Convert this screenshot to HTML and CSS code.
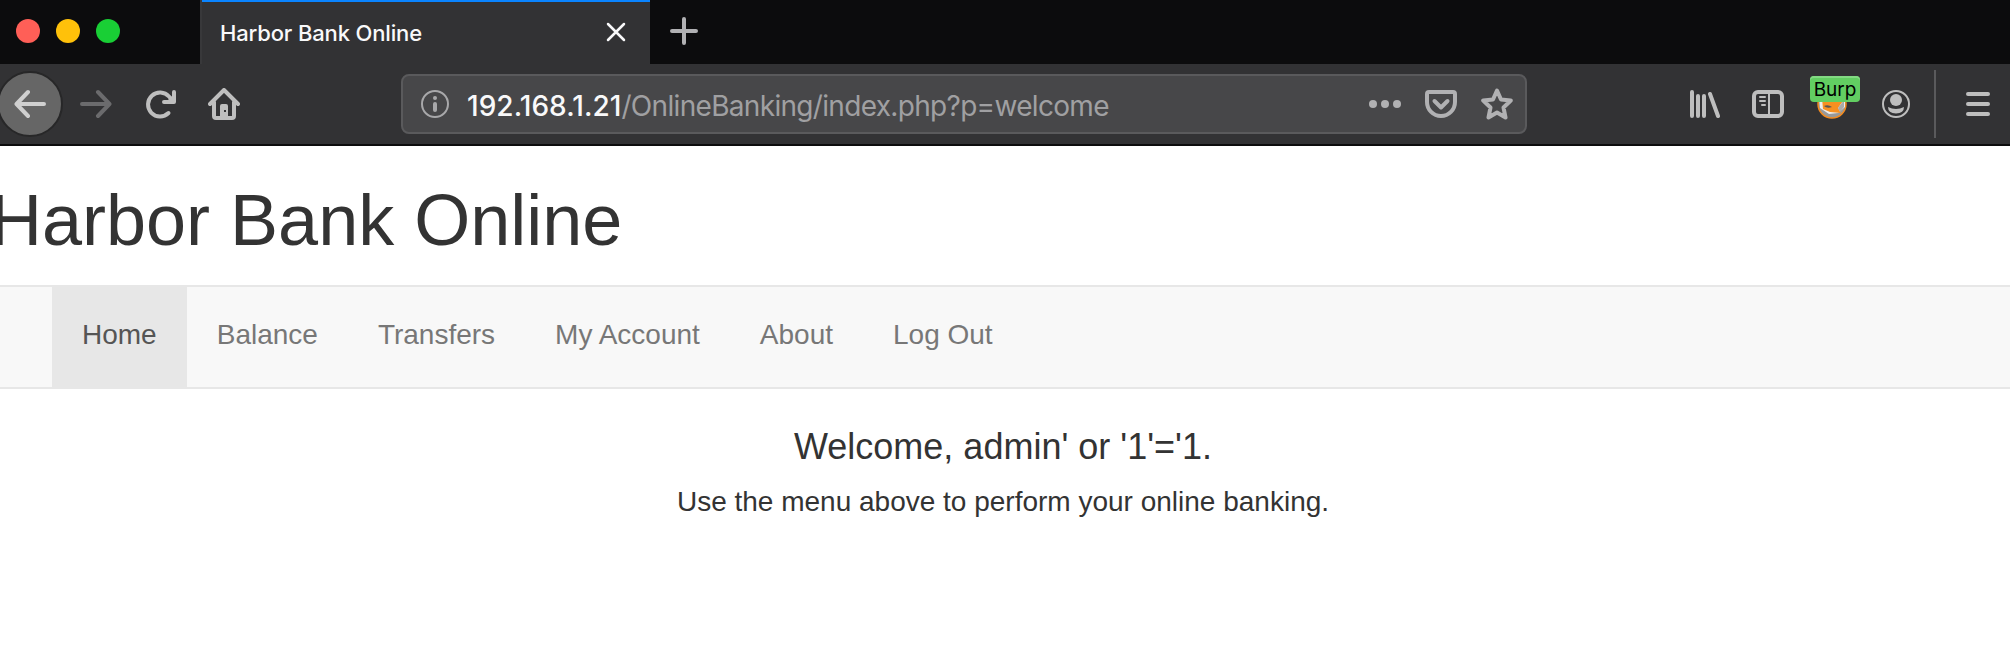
FILE: index.html
```html
<!DOCTYPE html>
<html lang="en">
<head>
<meta charset="utf-8">
<title>Harbor Bank Online</title>
<link rel="stylesheet" href="styles.css">
</head>
<body>
<div class="tabstrip">
  <div class="lights"><span class="light red"></span><span class="light yellow"></span><span class="light green"></span></div>
  <div class="tab">
    <span class="tab-title">Harbor Bank Online</span>
    <svg class="tab-close" viewBox="0 0 20 20"><path d="M2 2 18 18M18 2 2 18"/></svg>
  </div>
  <svg class="new-tab" viewBox="0 0 28 28"><path d="M14 2V26M2 14H26"/></svg>
</div>
<div class="toolbar">
  <div class="nav-buttons">
    <span class="back"><svg class="icon" viewBox="0 0 32 32"><path d="M30 16H3M14 4 2.500 16 14 28"/></svg></span>
    <svg class="icon disabled" viewBox="0 0 32 32"><path d="M2 16H29M18 4 29.500 16 18 28"/></svg>
    <svg class="icon" viewBox="0 0 32 32"><path d="M24.500 25A12 12 0 1 1 25 8.500L28 12M30 4V14H20"/><path class="solid" d="M30 6V14H22Z"/></svg>
    <svg class="icon" viewBox="0 0 32 32"><path d="M2 16 16 2 30 16M6 14V28Q6 30 8 30H24Q26 30 26 28V14"/><path class="solid" fill-rule="evenodd" d="M12 30V18Q12 16 14 16H18Q20 16 20 18V30ZM16 22V24H18V22Z"/></svg>
  </div>
  <div class="urlbar">
    <svg class="icon info" viewBox="0 0 32 32"><circle cx="16" cy="16" r="13"/><circle class="solid" cx="16" cy="10" r="2"/><rect class="solid" x="14" y="14" width="4" height="10" rx="2"/></svg>
    <span class="url"><span class="host">192.168.1.21</span><span class="path">/OnlineBanking/index.php?p=welcome</span></span>
    <div class="url-actions">
      <svg class="icon" viewBox="0 0 32 32"><g class="solid"><circle cx="4" cy="16" r="4"/><circle cx="16" cy="16" r="4"/><circle cx="28" cy="16" r="4"/></g></svg>
      <svg class="icon" viewBox="0 0 32 32"><path d="M4 4H28Q30 4 30 6V14A14 14 0 0 1 2 14V6Q2 4 4 4ZM9.500 13 16 19.500 22.500 13"/></svg>
      <svg class="icon" viewBox="0 0 32 32"><path d="M16 2.500 20 11.500 29.800 12.500 22.500 19.500 24.500 29.500 16 24.500 7.500 29.500 9.500 19.500 2.200 12.500 12 11.500Z"/></svg>
    </div>
  </div>
  <div class="tools">
    <svg class="icon" viewBox="0 0 32 32"><path d="M4 4V28M10 8V28M16 8V28M22 6 30 28"/></svg>
    <svg class="icon" viewBox="0 0 32 32"><rect x="2" y="4" width="28" height="24" rx="4"/><path class="thin" d="M17 4V28M8 9H13M8 13H13M10 17H13"/></svg>
    <div class="extension">
      <svg class="icon fox" viewBox="0 0 32 32"><circle cx="16" cy="16" r="14" fill="#999" stroke="#f38b20" stroke-width="1.500"/><path d="M3 10H29V19L22 25 13 26 4 20Z" fill="#eee"/><path d="M6 10H29L22 20 25 25 14 24 7 21Z" fill="#f79020"/><path d="M8 18Q12 16 16 19Q11 21 8 18" fill="#555"/><path d="M22 20 28 12V19L24 24Z" fill="#aaa"/></svg>
      <span class="badge">Burp</span>
    </div>
    <svg class="icon" viewBox="0 0 32 32"><circle class="thin" cx="16" cy="16" r="13"/><circle class="solid" cx="16" cy="12" r="6"/><path class="solid" d="M8 19Q16 23 24 19Q24 25 16 25.500Q8 25 8 19Z"/></svg>
    <span class="separator"></span>
    <svg class="icon menu" viewBox="0 0 32 32"><path d="M6 6H26M6 16H26M6 26H26"/></svg>
  </div>
</div>
<main class="page">
  <h1 class="heading">Harbor Bank Online</h1>
  <nav class="navbar">
    <a class="nav-link active">Home</a><a class="nav-link">Balance</a><a class="nav-link">Transfers</a><a class="nav-link">My Account</a><a class="nav-link">About</a><a class="nav-link">Log Out</a>
  </nav>
  <section class="welcome">
    <h4 class="greeting">Welcome, admin' or '1'='1.</h4>
    <p class="hint">Use the menu above to perform your online banking.</p>
  </section>
</main>
</body>
</html>
```
FILE: styles.css
```css
* { box-sizing: border-box; }
body { margin: 0; width: 2010px; height: 670px; overflow: hidden; background: #fff; font-family: "Liberation Sans", Arial, sans-serif; color: #333; }
.tabstrip { display: flex; height: 64px; background: #0c0c0d; font-family: Inter, sans-serif; }
.lights { display: flex; gap: 16px; width: 200px; padding: 19px 0 0 16px; }
.light { width: 24px; height: 24px; border-radius: 50%; }
.red { background: #ff5f57; }
.yellow { background: #ffc10a; }
.green { background: #19cf35; }
.tab { display: flex; align-items: center; justify-content: space-between; width: 450px; padding: 0 24px 0 18px; background: linear-gradient(#0a84ff, #0a84ff) top / 100% 2px no-repeat #323234; border-left: 2px solid #38383a; }
.tab-title { padding-top: 2px; font-size: 22px; font-weight: 500; letter-spacing: -0.15px; color: #f9f9fa; white-space: nowrap; }
.tab-close { width: 20px; height: 20px; fill: none; stroke: #f9f9fa; stroke-width: 2.5; stroke-linecap: round; }
.new-tab { width: 28px; height: 28px; margin: 17px 0 0 20px; fill: none; stroke: #b1b1b3; stroke-width: 4; stroke-linecap: round; }
.toolbar { display: flex; align-items: center; height: 82px; background: #323234; border-bottom: 2px solid #0c0c0d; font-family: Inter, sans-serif; }
.icon { display: block; flex: none; width: 32px; height: 32px; fill: none; stroke: #bebebe; stroke-width: 4; stroke-linecap: round; stroke-linejoin: round; }
.icon .solid { fill: #bebebe; stroke: none; }
.icon .thin { stroke-width: 2; }
.icon.disabled { stroke: #6b6b6d; }
.nav-buttons { display: flex; align-items: center; gap: 32px; width: 401px; }
.back { display: flex; align-items: center; justify-content: center; flex: none; width: 66px; height: 66px; margin: 0 -15px 0 -3px; border-radius: 50%; background: #666; border: 2px solid #272728; }
.back .icon { stroke: #d0d0d0; }
.urlbar { display: flex; align-items: center; width: 1126px; height: 60px; padding: 0 12px 0 16px; background: #474749; border: 2px solid #5a5a5c; border-radius: 8px; }
.icon.info { stroke: #a8a8aa; stroke-width: 2; }
.info .solid { fill: #a8a8aa; }
.url { flex: 1; margin-left: 16px; padding-top: 3px; font-size: 28px; white-space: nowrap; }
.host { color: #f9f9fa; font-weight: 500; letter-spacing: 0.05px; }
.path { color: #a0a0a2; letter-spacing: -0.68px; }
.url-actions { display: flex; gap: 24px; }
.url-actions .icon { stroke: #b1b1b3; }
.url-actions .solid { fill: #b1b1b3; stroke: none; }
.tools { display: flex; align-items: center; gap: 32px; margin-left: 161px; }
.extension { position: relative; }
.icon.fox { stroke: none; }
.badge { position: absolute; left: -6px; top: -12px; width: 50px; height: 26px; border-radius: 4px; background: #62ce62; box-shadow: inset 0 2px #83da83; font-size: 19px; line-height: 27px; color: #000; text-align: center; }
.separator { width: 2px; height: 68px; margin-left: -10px; background: #5a5a5c; }
.menu { margin-left: -6px; }
.heading { height: 139px; margin: 0; padding-top: 35px; font-size: 72px; line-height: 79px; font-weight: 400; text-indent: -10px; white-space: nowrap; }
.navbar { display: flex; height: 104px; padding-left: 52px; background: #f8f8f8; border: solid #e7e7e7; border-width: 2px 0; }
.nav-link { padding: 28px 30px 32px; font-size: 28px; line-height: 40px; color: #777; white-space: nowrap; }
.active { background: #e7e7e7; color: #555; }
.welcome { padding: 38px 4px 0 0; text-align: center; }
.greeting { margin: 0; font-size: 36px; line-height: 40px; font-weight: 400; }
.hint { margin: 15px 0 0; font-size: 28px; line-height: 40px; }
```
